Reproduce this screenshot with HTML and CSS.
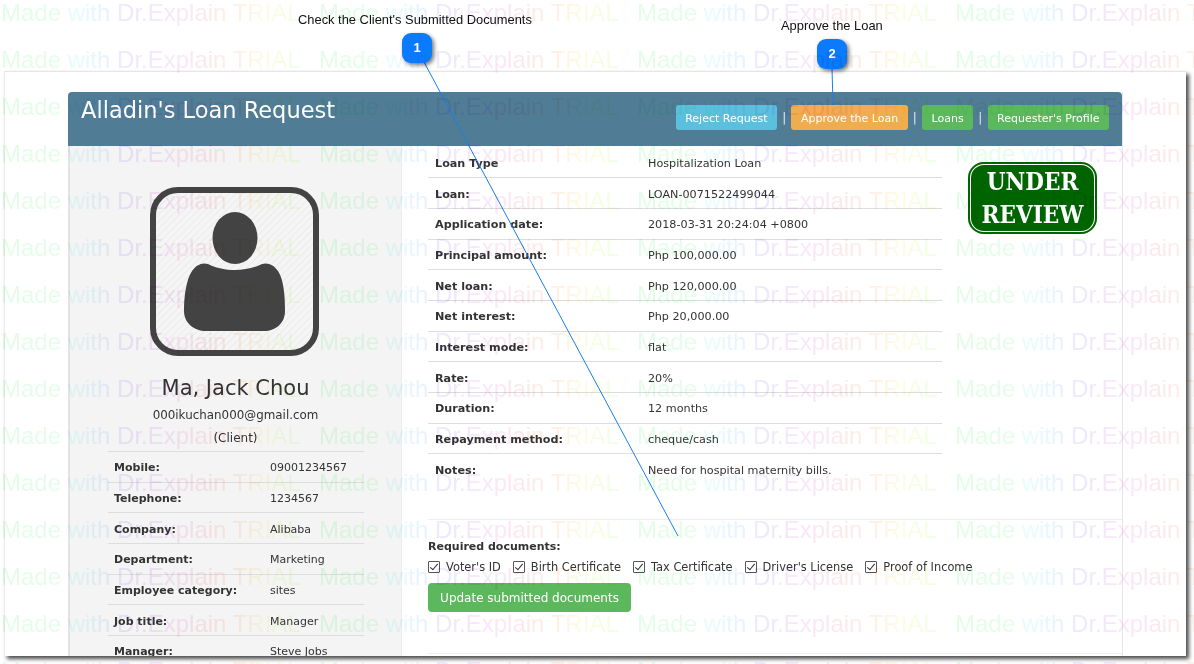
FILE: index.html
```html
<!DOCTYPE html>
<html lang="en">
<head>
    <meta charset="UTF-8">
    <title>Alladin's Loan Request</title>
    <link rel="stylesheet" href="styles.css">
</head>
<body>

    <div class="shot">
        <div class="panel">
            <header class="panel-head">
                <h1>Alladin's Loan Request</h1>
                <nav class="actions">
                    <a class="btn btn-info">Reject Request</a>
                    <span class="sep">|</span>
                    <a class="btn btn-warning">Approve the Loan</a>
                    <span class="sep">|</span>
                    <a class="btn btn-success">Loans</a>
                    <span class="sep">|</span>
                    <a class="btn btn-success">Requester's Profile</a>
                </nav>
            </header>

            <div class="panel-body">
                <aside class="sidebar">
                    <svg class="avatar" width="169" height="169" viewBox="0 0 169 169">
                        <defs>
                            <pattern id="hatch" width="5" height="5" patternUnits="userSpaceOnUse" patternTransform="rotate(45)">
                                <rect width="5" height="5" fill="#f5f5f5"/>
                                <rect width="1" height="5" fill="#ebebeb"/>
                            </pattern>
                        </defs>
                        <rect x="3" y="3" width="163" height="163" rx="25" fill="url(#hatch)" stroke="#434343" stroke-width="6"/>
                        <ellipse cx="85" cy="51" rx="22.5" ry="26" fill="#434343"/>
                        <path fill="#434343" d="M58 77C66 81 76 83 85 83C94 83 104 81 112 77C118 75 124 78 128 84C134 93 135 110 135 124C135 136 126 144 114 144L56 144C44 144 34 136 34 124C34 110 36 93 42 84C46 78 52 75 58 77Z"/>
                    </svg>
                    <h2 class="name">Ma, Jack Chou</h2>
                    <p class="email">000ikuchan000@gmail.com</p>
                    <p class="role">(Client)</p>
                    <dl class="rows rows-side">
                        <div class="row"><dt>Mobile:</dt><dd>09001234567</dd></div>
                        <div class="row"><dt>Telephone:</dt><dd>1234567</dd></div>
                        <div class="row"><dt>Company:</dt><dd>Alibaba</dd></div>
                        <div class="row"><dt>Department:</dt><dd>Marketing</dd></div>
                        <div class="row"><dt>Employee category:</dt><dd>sites</dd></div>
                        <div class="row"><dt>Job title:</dt><dd>Manager</dd></div>
                        <div class="row"><dt>Manager:</dt><dd>Steve Jobs</dd></div>
                    </dl>
                </aside>

                <main class="main">
                    <div class="details">
                        <dl class="rows rows-main">
                            <div class="row"><dt>Loan Type</dt><dd>Hospitalization Loan</dd></div>
                            <div class="row"><dt>Loan:</dt><dd>LOAN-0071522499044</dd></div>
                            <div class="row"><dt>Application date:</dt><dd>2018-03-31 20:24:04 +0800</dd></div>
                            <div class="row"><dt>Principal amount:</dt><dd>Php 100,000.00</dd></div>
                            <div class="row"><dt>Net loan:</dt><dd>Php 120,000.00</dd></div>
                            <div class="row"><dt>Net interest:</dt><dd>Php 20,000.00</dd></div>
                            <div class="row"><dt>Interest mode:</dt><dd>flat</dd></div>
                            <div class="row"><dt>Rate:</dt><dd>20%</dd></div>
                            <div class="row"><dt>Duration:</dt><dd>12 months</dd></div>
                            <div class="row"><dt>Repayment method:</dt><dd>cheque/cash</dd></div>
                            <div class="row row-notes"><dt>Notes:</dt><dd>Need for hospital maternity bills.</dd></div>
                        </dl>
                        <div class="stamp"><span>UNDER</span><span>REVIEW</span></div>
                    </div>

                    <form class="docs">
                        <p class="docs-title">Required documents:</p>
                        <div class="checks">
                            <label class="check"><input type="checkbox" checked>Voter's ID</label>
                            <label class="check"><input type="checkbox" checked>Birth Certificate</label>
                            <label class="check"><input type="checkbox" checked>Tax Certificate</label>
                            <label class="check"><input type="checkbox" checked>Driver's License</label>
                            <label class="check"><input type="checkbox" checked>Proof of Income</label>
                        </div>
                        <button type="button" class="btn btn-success btn-update">Update submitted documents</button>
                    </form>
                </main>
            </div>
        </div>
    </div>

    <!-- callouts -->
    <svg class="callout-lines" width="1194" height="664">
        <line x1="424" y1="62" x2="678" y2="536"/>
        <line x1="832" y1="68" x2="833" y2="105"/>
    </svg>
    <p class="callout-label label-one">Check the Client's Submitted Documents</p>
    <span class="badge badge-one">1</span>
    <p class="callout-label label-two">Approve the Loan</p>
    <span class="badge badge-two">2</span>

    <!-- trial watermark -->
    <svg class="watermark" width="1194" height="664" aria-hidden="true">
        <defs>
            <linearGradient id="rainbow" gradientUnits="userSpaceOnUse" x1="1" y1="0" x2="319" y2="0" spreadMethod="repeat">
                <stop offset="0" stop-color="#d5fcd9"/>
                <stop offset="0.19" stop-color="#d8fce0"/>
                <stop offset="0.23" stop-color="#dbfcf9"/>
                <stop offset="0.33" stop-color="#dcecfe"/>
                <stop offset="0.40" stop-color="#e4dcfb"/>
                <stop offset="0.52" stop-color="#f6daf8"/>
                <stop offset="0.64" stop-color="#fbdde2"/>
                <stop offset="0.75" stop-color="#fee8d6"/>
                <stop offset="0.83" stop-color="#fdfbd8"/>
                <stop offset="0.93" stop-color="#e6ffd6"/>
                <stop offset="1" stop-color="#d5fcd9"/>
            </linearGradient>
        </defs>
        <text><tspan x="1" y="21">Made with Dr.Explain TRIAL</tspan><tspan x="319" y="21">Made with Dr.Explain TRIAL</tspan><tspan x="637" y="21">Made with Dr.Explain TRIAL</tspan><tspan x="955" y="21">Made with Dr.Explain TRIAL</tspan></text>
        <text><tspan x="1" y="68">Made with Dr.Explain TRIAL</tspan><tspan x="319" y="68">Made with Dr.Explain TRIAL</tspan><tspan x="637" y="68">Made with Dr.Explain TRIAL</tspan><tspan x="955" y="68">Made with Dr.Explain TRIAL</tspan></text>
        <text><tspan x="1" y="115">Made with Dr.Explain TRIAL</tspan><tspan x="319" y="115">Made with Dr.Explain TRIAL</tspan><tspan x="637" y="115">Made with Dr.Explain TRIAL</tspan><tspan x="955" y="115">Made with Dr.Explain TRIAL</tspan></text>
        <text><tspan x="1" y="162">Made with Dr.Explain TRIAL</tspan><tspan x="319" y="162">Made with Dr.Explain TRIAL</tspan><tspan x="637" y="162">Made with Dr.Explain TRIAL</tspan><tspan x="955" y="162">Made with Dr.Explain TRIAL</tspan></text>
        <text><tspan x="1" y="209">Made with Dr.Explain TRIAL</tspan><tspan x="319" y="209">Made with Dr.Explain TRIAL</tspan><tspan x="637" y="209">Made with Dr.Explain TRIAL</tspan><tspan x="955" y="209">Made with Dr.Explain TRIAL</tspan></text>
        <text><tspan x="1" y="256">Made with Dr.Explain TRIAL</tspan><tspan x="319" y="256">Made with Dr.Explain TRIAL</tspan><tspan x="637" y="256">Made with Dr.Explain TRIAL</tspan><tspan x="955" y="256">Made with Dr.Explain TRIAL</tspan></text>
        <text><tspan x="1" y="303">Made with Dr.Explain TRIAL</tspan><tspan x="319" y="303">Made with Dr.Explain TRIAL</tspan><tspan x="637" y="303">Made with Dr.Explain TRIAL</tspan><tspan x="955" y="303">Made with Dr.Explain TRIAL</tspan></text>
        <text><tspan x="1" y="350">Made with Dr.Explain TRIAL</tspan><tspan x="319" y="350">Made with Dr.Explain TRIAL</tspan><tspan x="637" y="350">Made with Dr.Explain TRIAL</tspan><tspan x="955" y="350">Made with Dr.Explain TRIAL</tspan></text>
        <text><tspan x="1" y="397">Made with Dr.Explain TRIAL</tspan><tspan x="319" y="397">Made with Dr.Explain TRIAL</tspan><tspan x="637" y="397">Made with Dr.Explain TRIAL</tspan><tspan x="955" y="397">Made with Dr.Explain TRIAL</tspan></text>
        <text><tspan x="1" y="444">Made with Dr.Explain TRIAL</tspan><tspan x="319" y="444">Made with Dr.Explain TRIAL</tspan><tspan x="637" y="444">Made with Dr.Explain TRIAL</tspan><tspan x="955" y="444">Made with Dr.Explain TRIAL</tspan></text>
        <text><tspan x="1" y="491">Made with Dr.Explain TRIAL</tspan><tspan x="319" y="491">Made with Dr.Explain TRIAL</tspan><tspan x="637" y="491">Made with Dr.Explain TRIAL</tspan><tspan x="955" y="491">Made with Dr.Explain TRIAL</tspan></text>
        <text><tspan x="1" y="538">Made with Dr.Explain TRIAL</tspan><tspan x="319" y="538">Made with Dr.Explain TRIAL</tspan><tspan x="637" y="538">Made with Dr.Explain TRIAL</tspan><tspan x="955" y="538">Made with Dr.Explain TRIAL</tspan></text>
        <text><tspan x="1" y="585">Made with Dr.Explain TRIAL</tspan><tspan x="319" y="585">Made with Dr.Explain TRIAL</tspan><tspan x="637" y="585">Made with Dr.Explain TRIAL</tspan><tspan x="955" y="585">Made with Dr.Explain TRIAL</tspan></text>
        <text><tspan x="1" y="632">Made with Dr.Explain TRIAL</tspan><tspan x="319" y="632">Made with Dr.Explain TRIAL</tspan><tspan x="637" y="632">Made with Dr.Explain TRIAL</tspan><tspan x="955" y="632">Made with Dr.Explain TRIAL</tspan></text>
        <text><tspan x="1" y="679">Made with Dr.Explain TRIAL</tspan><tspan x="319" y="679">Made with Dr.Explain TRIAL</tspan><tspan x="637" y="679">Made with Dr.Explain TRIAL</tspan><tspan x="955" y="679">Made with Dr.Explain TRIAL</tspan></text>
    </svg>

</body>
</html>
```

FILE: styles.css
```css
html, body {
    height: 100%;
}
body {
    margin: 0;
    padding: 71px 0 0 4px;
    box-sizing: border-box;
    position: relative;
    overflow: hidden;
    background-color: #fff;
    font-family: 'DejaVu Sans', sans-serif;
    font-size: 11px;
    color: #333;
}
p, h1, h2, dl, dd {
    margin: 0;
}

/* captured window */
.shot {
    width: 1182px;
    height: 585px;
    box-sizing: border-box;
    padding: 20px 63px 0 63px;
    overflow: hidden;
    background-color: #fff;
    border-top: 1px solid #e6e6e6;
    border-left: 1px solid #eee;
    box-shadow: 3px 3px 4px rgba(0, 0, 0, 0.7);
}
.panel {
    border-right: 1px solid #e6e6e6;
    height: 100%;
}
.panel-head {
    display: flex;
    justify-content: space-between;
    height: 54px;
    box-sizing: border-box;
    padding: 4px 13px 0 13px;
    background-color: #507c96;
    border-radius: 4px 4px 0 0;
}
.panel-head h1 {
    font-size: 22.5px;
    font-weight: normal;
    line-height: 28px;
    color: #fff;
}
.actions {
    display: flex;
    align-items: center;
    gap: 5.2px;
    margin-top: 9px;
    height: 25px;
}
.sep {
    color: #e3eaef;
    font-size: 12px;
}
.btn {
    display: block;
    box-sizing: border-box;
    height: 25px;
    padding: 0 8.5px;
    border: 1px solid transparent;
    border-radius: 3px;
    font-family: 'DejaVu Sans', sans-serif;
    font-size: 11px;
    line-height: 25px;
    color: #fff;
}
.btn-info {
    background-color: #5bc0de;
}
.btn-warning {
    background-color: #f0ad4e;
}
.btn-success {
    background-color: #5cb85c;
}

.panel-body {
    display: flex;
    height: 531px;
}
.sidebar {
    flex: 0 0 334px;
    box-sizing: border-box;
    padding-top: 41px;
    background-color: #f4f4f4;
    border-left: 2px solid #e3e3e3;
    border-right: 1px solid #ececec;
    text-align: center;
    overflow: hidden;
}
.avatar {
    display: block;
    margin: 0 0 19px 80px;
}
.name {
    font-size: 21px;
    font-weight: normal;
    line-height: 26px;
}
.email {
    margin-top: 5px;
    font-size: 11.9px;
    line-height: 18px;
}
.role {
    margin-top: 5px;
    font-size: 12px;
    line-height: 18px;
}

/* label / value rows */
.row {
    display: flex;
    align-items: center;
    height: 30.7px;
    box-sizing: border-box;
    padding-top: 2px;
    border-bottom: 1px solid #ddd;
    padding-left: 7px;
}
.row dt {
    font-weight: bold;
}
.rows-side {
    width: 256px;
    margin: 4px 0 0 38px;
    border-top: 1px solid #ddd;
    text-align: left;
}
.rows-side .row {
    padding-left: 6px;
}
.rows-side dt {
    flex: 0 0 156px;
}
.rows-main {
    width: 514px;
    font-size: 11.2px;
}
.rows-main dt {
    flex: 0 0 213px;
}
.row-notes {
    border-bottom: 0;
}

.main {
    flex: 1;
    padding: 1.5px 0 0 26px;
    overflow: hidden;
}
.details {
    display: flex;
    gap: 26px;
    height: 371.5px;
    border-bottom: 1px solid #eee;
}
.stamp {
    flex: 0 0 129px;
    box-sizing: border-box;
    height: 72px;
    margin-top: 14.5px;
    display: flex;
    flex-direction: column;
    align-items: center;
    justify-content: center;
    background-color: #006400;
    box-shadow: inset 0 0 0 2px #006400, inset 0 0 0 3px #fff;
    border-radius: 16px;
    color: #fff;
    font-family: 'DejaVu Serif Condensed', 'DejaVu Serif', serif;
    font-size: 24px;
    font-weight: bold;
    line-height: 33px;
}
.docs {
    height: 134px;
    box-sizing: border-box;
    padding-top: 20px;
    border-bottom: 1px solid #eee;
}
.docs-title {
    font-weight: bold;
    line-height: 14px;
}
.checks {
    display: flex;
    gap: 12px;
    margin-top: 5px;
    font-size: 11.4px;
}
.check {
    display: flex;
    align-items: center;
    gap: 6px;
    height: 16px;
}
.check input {
    appearance: none;
    position: relative;
    width: 12px;
    height: 12px;
    margin: 0;
    background-color: #fff;
    border: 1px solid #555;
    border-radius: 1px;
}
.check input::after {
    content: "";
    position: absolute;
    left: 3px;
    top: 0;
    width: 3px;
    height: 7px;
    border: solid #333;
    border-width: 0 1.5px 1.5px 0;
    transform: rotate(40deg);
}
.btn-update {
    width: 203px;
    height: 29px;
    margin-top: 8px;
    padding: 0;
    font-size: 12px;
    line-height: 29px;
    border-radius: 4px;
}

/* callouts, placed on the picture */
.callout-lines {
    position: absolute;
    left: 0;
    top: 0;
}
.callout-lines line {
    stroke: #1a7fe8;
    stroke-width: 1;
}
.callout-label {
    position: absolute;
    font-family: 'Liberation Sans', sans-serif;
    font-size: 12.9px;
    line-height: 14px;
    color: #111;
    white-space: nowrap;
}
.label-one {
    left: 298px;
    top: 13px;
}
.label-two {
    left: 781px;
    top: 19px;
}
.badge {
    position: absolute;
    width: 30px;
    height: 30px;
    border-radius: 9px;
    background-color: #0a7bff;
    box-shadow: 2px 2px 4px rgba(0, 0, 0, 0.55);
    color: #fff;
    font-family: 'Liberation Sans', sans-serif;
    font-size: 13px;
    font-weight: bold;
    line-height: 30px;
    text-align: center;
}
.badge-one {
    left: 402px;
    top: 33px;
}
.badge-two {
    left: 817px;
    top: 39px;
}

/* watermark over the whole page */
.watermark {
    position: absolute;
    left: 0;
    top: 0;
    mix-blend-mode: multiply;
    pointer-events: none;
}
.watermark text {
    font-family: 'Liberation Sans', sans-serif;
    font-size: 24px;
    fill: url(#rainbow);
    fill-opacity: 0.65;
}
```
